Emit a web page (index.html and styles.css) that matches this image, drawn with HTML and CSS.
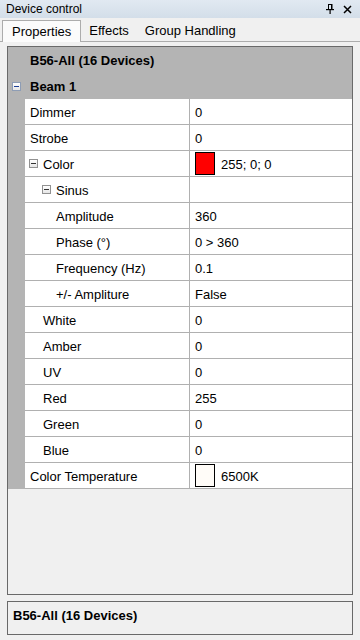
FILE: index.html
```html
<!DOCTYPE html>
<html lang="en">
<head>
  <meta charset="UTF-8">
  <meta name="viewport" content="width=device-width, initial-scale=1.0">
  <title>Device control</title>
  <link rel="stylesheet" href="styles.css">
</head>
<body>
  <div class="titlebar">
    <span class="title">Device control</span>
    <div class="title-icons">
      <svg class="pin" width="8" height="10" viewBox="0 0 8 10">
        <rect x="2.5" y="0.5" width="3" height="5" fill="none" stroke="#000"/>
        <rect x="5" y="0" width="1.5" height="6" fill="#000"/>
        <rect x="0" y="5" width="8" height="1.2" fill="#000"/>
        <rect x="3.5" y="6" width="1.2" height="4" fill="#000"/>
      </svg>
      <svg class="close" width="9" height="9" viewBox="0 0 9 9">
        <path d="M1 1 L8 8 M8 1 L1 8" stroke="#000" stroke-width="1.5"/>
      </svg>
    </div>
  </div>

  <div class="tabs">
    <div class="tab active">Properties</div>
    <div class="tab">Effects</div>
    <div class="tab">Group Handling</div>
  </div>

  <div class="panel">
    <div class="group">
      <div class="group-head">B56-All (16 Devices)</div>
      <div class="cat-head"><span class="toggle blue"></span>Beam 1</div>
      <div class="rows">
        <div class="row"><div class="name">Dimmer</div><div class="value">0</div></div>
        <div class="row"><div class="name">Strobe</div><div class="value">0</div></div>
        <div class="row"><div class="name lv1"><span class="toggle"></span>Color</div><div class="value"><span class="swatch red"></span>255; 0; 0</div></div>
        <div class="row"><div class="name lv2"><span class="toggle"></span>Sinus</div><div class="value"></div></div>
        <div class="row"><div class="name lv3">Amplitude</div><div class="value">360</div></div>
        <div class="row"><div class="name lv3">Phase (°)</div><div class="value">0 &gt; 360</div></div>
        <div class="row"><div class="name lv3">Frequency (Hz)</div><div class="value">0.1</div></div>
        <div class="row"><div class="name lv3">+/- Ampliture</div><div class="value">False</div></div>
        <div class="row"><div class="name lv2t">White</div><div class="value">0</div></div>
        <div class="row"><div class="name lv2t">Amber</div><div class="value">0</div></div>
        <div class="row"><div class="name lv2t">UV</div><div class="value">0</div></div>
        <div class="row"><div class="name lv2t">Red</div><div class="value">255</div></div>
        <div class="row"><div class="name lv2t">Green</div><div class="value">0</div></div>
        <div class="row"><div class="name lv2t">Blue</div><div class="value">0</div></div>
        <div class="row"><div class="name">Color Temperature</div><div class="value"><span class="swatch warm"></span>6500K</div></div>
      </div>
    </div>
  </div>

  <div class="info">B56-All (16 Devices)</div>
</body>
</html>
```

FILE: styles.css
```css
* { box-sizing: border-box; }
body {
  margin: 0;
  width: 360px;
  height: 640px;
  background: #f0f0f0;
  color: #000;
  font-family: "Liberation Sans", Arial, sans-serif;
  font-size: 13px;
  overflow: hidden;
}

.titlebar {
  height: 18px;
  display: flex; align-items: center; justify-content: space-between;
  padding: 0 8px 0 6px;
  background: linear-gradient(#e1e9f2, #d3dee9);
  font-size: 12px;
}
.title-icons { display: flex; align-items: center; gap: 9px; }
.pin, .close { display: block; }

.tabs {
  display: flex;
  height: 24px;
  padding: 2px 0 0 2px;
  border-bottom: 1px solid #acacac;
}
.tab {
  display: flex; align-items: center;
  height: 21px;
  padding: 0 8px;
}
.tab.active {
  height: 22px;
  padding: 0 9px;
  background: #fbfbfb;
  border: 1px solid #acacac;
  border-bottom: none;
  margin-bottom: -1px;
}

.panel {
  margin: 4px 7px 0;
  height: 549px;
  border: 1px solid #696969;
  background: #f0f0f0;
}
.group { background: #b4b4b4; }
.group-head, .cat-head {
  height: 26px;
  display: flex; align-items: center;
  font-weight: bold;
}
.group-head { padding-left: 22px; }
.cat-head { padding-left: 4px; }
.cat-head .toggle { margin-right: 9px; }

.toggle {
  width: 9px; height: 9px;
  border: 1px solid #919191;
  background: linear-gradient(#ffffff, #e6e6e6);
  position: relative;
  flex: none;
}
.toggle::after {
  content: "";
  position: absolute; left: 1px; top: 3px;
  width: 5px; height: 1px;
  background: #333;
}
.toggle.blue { border-color: #8e9db5; }
.toggle.blue::after { background: #1c3f95; }

.rows { margin-left: 17px; background: #fff; }
.row {
  display: flex;
  height: 26px;
  border-bottom: 1px solid #b0b0b0;
}
.name, .value { display: flex; align-items: center; padding-top: 2px; }
.name {
  width: 165px;
  padding-left: 5px;
  border-right: 1px solid #b0b0b0;
}
.name .toggle { margin-right: 5px; margin-top: -2px; }
.lv1 { padding-left: 4px; }
.lv2 { padding-left: 17px; }
.lv3 { padding-left: 31px; }
.lv2t { padding-left: 18px; }
.value { flex: 1; padding-left: 5px; }

.swatch {
  width: 20px; height: 23px;
  border: 1px solid #000;
  margin: -2px 6px 0 0;
  flex: none;
}
.swatch.red { background: #ff0000; }
.swatch.warm { background: #fffcf8; }

.info {
  margin: 6px 7px 0;
  height: 34px;
  border: 1px solid #696969;
  padding: 6px 0 0 5px;
  line-height: 16px;
  font-weight: bold;
}
```
